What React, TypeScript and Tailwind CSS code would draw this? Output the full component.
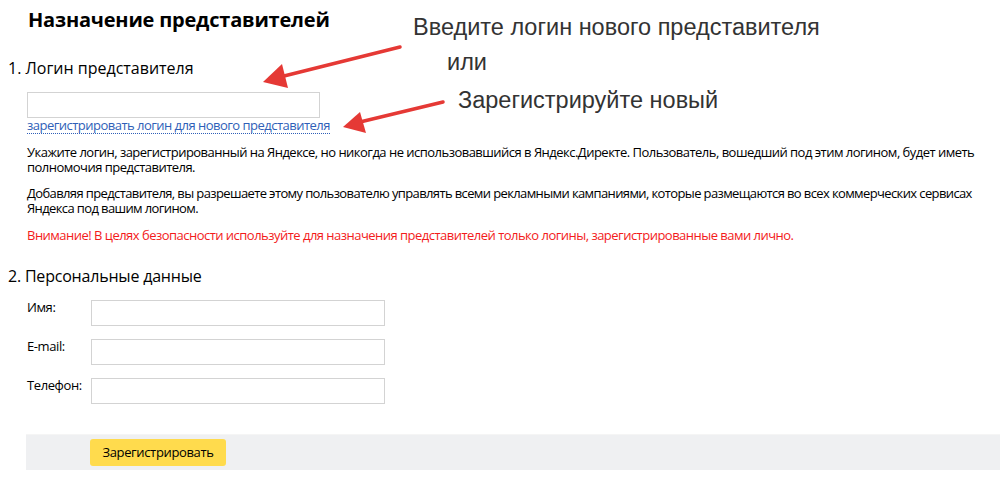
import React from "react";

const body = { fontFamily: '"Open Sans", "Noto Sans", Arial, sans-serif' };
const note = { fontFamily: '"Liberation Sans", Arial, sans-serif' };

function Field({ label }: { label: string }) {
  return (
    <div className="flex items-start">
      <div className="w-[64px] text-[13px] leading-[14px] tracking-[-0.4px] text-black">{label}</div>
      <input className="w-[294px] h-[26px] border border-[#d3d3d3] bg-white outline-none" />
    </div>
  );
}

export default function App() {
  return (
    <div className="relative w-[1000px] h-[479px] bg-white overflow-hidden" style={body}>
      <div className="pt-[8px]">
        <h1 className="pl-[28px] text-[20px] leading-[24px] font-bold text-black tracking-[-0.2px]">
          Назначение представителей
        </h1>
        <h2 className="mt-[26px] pl-[8px] text-[16px] leading-[20px] text-black">1. Логин представителя</h2>
        <div className="pl-[27px] mt-[14px] text-[13px] leading-[15px] tracking-[-0.52px]">
          <input className="block w-[293px] h-[26px] border border-[#d3d3d3] bg-white outline-none" />
          <a className="block w-fit text-[#2f5fb8] border-b border-dotted border-[#2f5fb8]">
            зарегистрировать логин для нового представителя
          </a>
          <p className="mt-[11px] text-black whitespace-nowrap">
            Укажите логин, зарегистрированный на Яндексе, но никогда не использовавшийся в Яндекс.Директе. Пользователь, вошедший под этим логином, будет иметь
            <br />
            полномочия представителя.
          </p>
          <p className="mt-[11px] text-black whitespace-nowrap tracking-[-0.62px]">
            Добавляя представителя, вы разрешаете этому пользователю управлять всеми рекламными кампаниями, которые размещаются во всех коммерческих сервисах
            <br />
            Яндекса под вашим логином.
          </p>
          <p className="mt-[12px] text-[#f31b1b] whitespace-nowrap">
            Внимание! В целях безопасности используйте для назначения представителей только логины, зарегистрированные вами лично.
          </p>
        </div>
        <h2 className="mt-[23px] pl-[8px] text-[16px] leading-[20px] tracking-[-0.2px] text-black">2. Персональные данные</h2>
        <div className="pl-[27px] mt-[14px] flex flex-col gap-[13px]">
          <Field label="Имя:" />
          <Field label="E-mail:" />
          <Field label="Телефон:" />
        </div>
        <div className="ml-[26px] mt-[30px] h-[36px] bg-[#eff0f2] border-t border-[#f5f5f5] flex items-center pl-[64px]">
          <button className="h-[27px] w-[136px] rounded-[3px] bg-[#ffdb4d] text-[13px] tracking-[-0.35px] text-black">
            Зарегистрировать
          </button>
        </div>
      </div>

      {/* annotations */}
      <div className="absolute left-[413px] top-[14px] text-[23.5px] leading-[27px] text-[#333]" style={note}>
        Введите логин нового представителя
      </div>
      <div className="absolute left-[447px] top-[49px] text-[23.5px] leading-[27px] text-[#333]" style={note}>
        или
      </div>
      <div className="absolute left-[458px] top-[87px] text-[23.5px] leading-[27px] text-[#333]" style={note}>
        Зарегистрируйте новый
      </div>
      <svg className="absolute left-0 top-0" width="1000" height="479" viewBox="0 0 1000 479">
        <g stroke="#e53935" strokeWidth="3.5" strokeLinecap="round" fill="#e53935">
          <line x1="400" y1="47" x2="280" y2="77" />
          <line x1="443" y1="102" x2="360" y2="122" />
        </g>
        <g fill="#e53935">
          <polygon points="263,82 282,64 288,88" />
          <polygon points="343,127 360,112 366,133" />
        </g>
      </svg>
    </div>
  );
}
